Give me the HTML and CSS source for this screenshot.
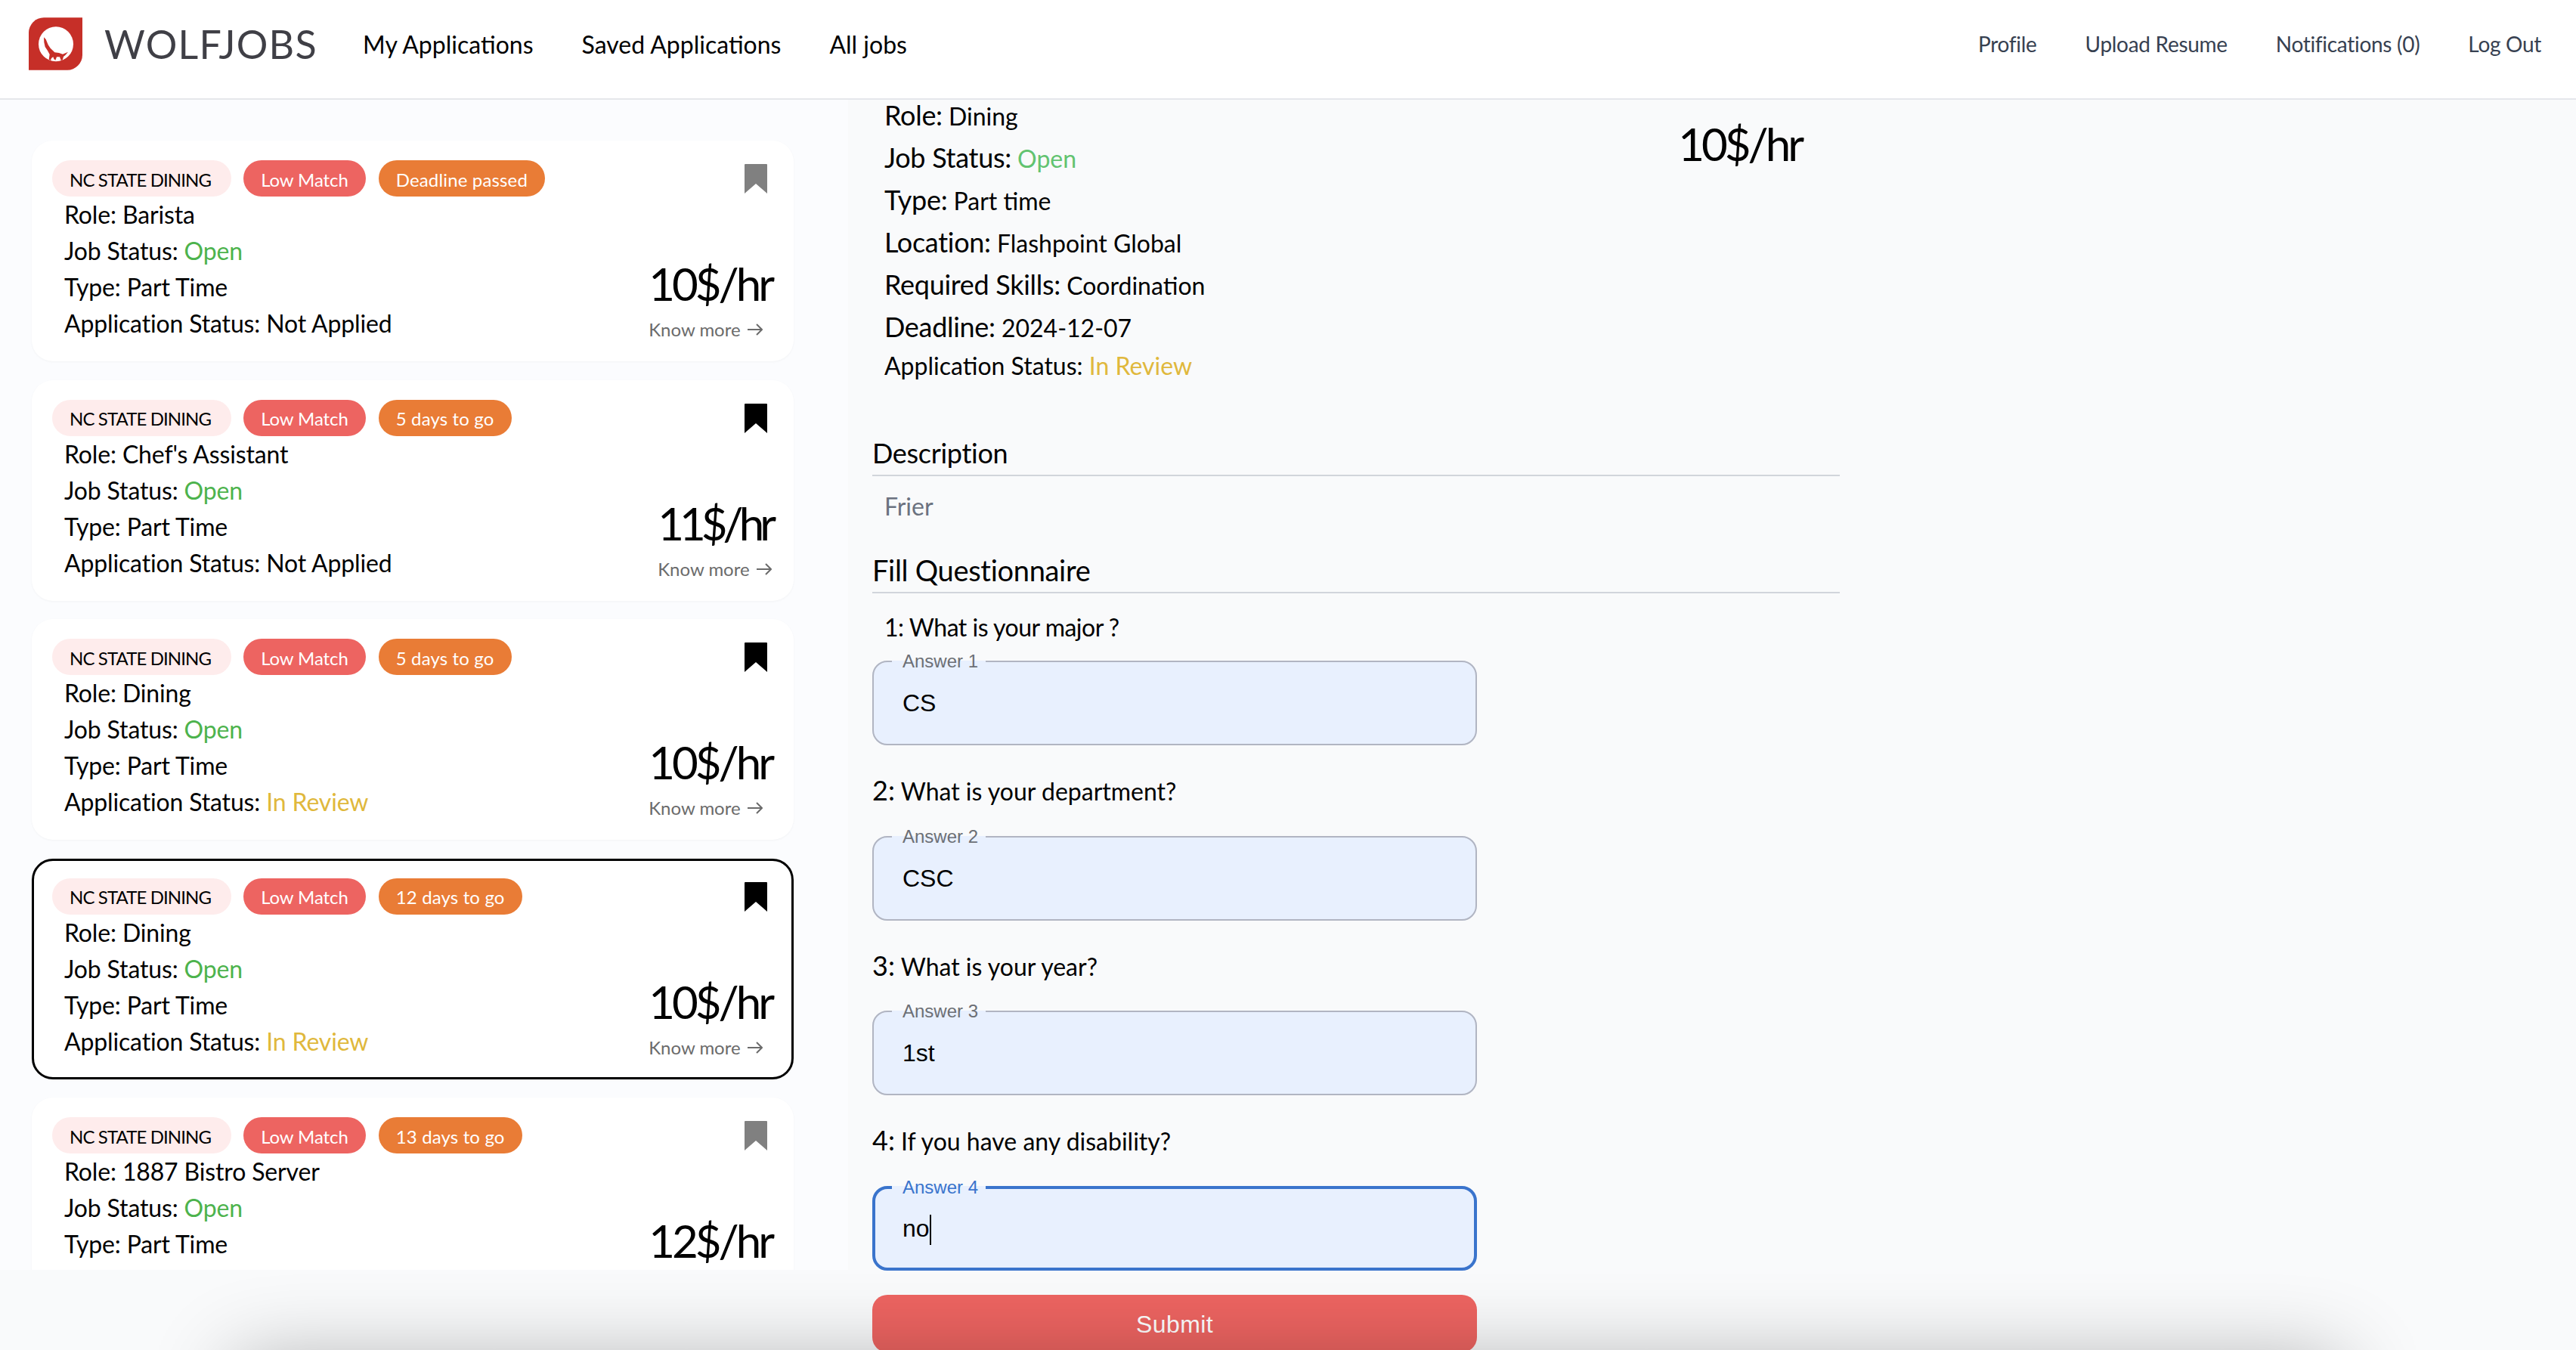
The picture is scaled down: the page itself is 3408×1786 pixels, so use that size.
FILE: index.html
```html
<!DOCTYPE html>
<html lang="en">
<head>
<meta charset="utf-8">
<title>WolfJobs</title>
<link rel="stylesheet" href="styles.css">
</head>
<body>
<header class="nav">
  <svg class="logo" viewBox="5 10 213 208" aria-label="WolfJobs logo">
    <path fill="#c62f28" d="M65 10H218V158A60 60 0 0 1 158 218H5V70A60 60 0 0 1 65 10Z"/>
    <circle cx="113" cy="115" r="69" fill="#fff"/>
    <path fill="#c62f28" d="M65 88L73 96L82 118L91 131L108 148L125 150L140 155L161 146L151 158L143 165L139 179L133 179L128 166L116 166L111 179L105 174L102 166L95 171L92 180L85 176L88 156L80 141L70 126L66 108Z"/>
    <path fill="#c62f28" d="M52 150Q62 168 76 176L82 184L62 178Z"/>
  </svg>
  <span class="brand">WOLFJOBS</span>
  <nav class="main-links">
    <a>My Applications</a>
    <a>Saved Applications</a>
    <a>All jobs</a>
  </nav>
  <nav class="side-links">
    <a>Profile</a>
    <a>Upload Resume</a>
    <a>Notifications (0)</a>
    <a>Log Out</a>
  </nav>
</header>

<main class="layout">
  <section class="job-list">
    <article class="card">
      <div class="card-top">
        <div class="pills"><span class="pill pill-company">NC STATE DINING</span><span class="pill pill-match">Low Match</span><span class="pill pill-deadline">Deadline passed</span></div>
        <svg class="bookmark bookmark-off" viewBox="0 0 30 39"><path d="M0 1Q0 0 1 0H29Q30 0 30 1V39L15 26L0 39Z"/></svg>
      </div>
      <div class="card-body">
        <div class="info">
          <div>Role: Barista</div>
          <div>Job Status: <span class="open">Open</span></div>
          <div>Type: Part Time</div>
          <div>Application Status: Not Applied</div>
        </div>
        <div class="pay">
          <div class="price">10$/hr</div>
          <div class="more">Know more <svg class="arrow" viewBox="0 0 20 16"><path d="M0 8H19M12 1L19 8L12 15"/></svg></div>
        </div>
      </div>
    </article>

    <article class="card">
      <div class="card-top">
        <div class="pills"><span class="pill pill-company">NC STATE DINING</span><span class="pill pill-match">Low Match</span><span class="pill pill-deadline">5 days to go</span></div>
        <svg class="bookmark" viewBox="0 0 30 39"><path d="M0 1Q0 0 1 0H29Q30 0 30 1V39L15 26L0 39Z"/></svg>
      </div>
      <div class="card-body">
        <div class="info">
          <div>Role: Chef's Assistant</div>
          <div>Job Status: <span class="open">Open</span></div>
          <div>Type: Part Time</div>
          <div>Application Status: Not Applied</div>
        </div>
        <div class="pay">
          <div class="price price-narrow">11$/hr</div>
          <div class="more">Know more <svg class="arrow" viewBox="0 0 20 16"><path d="M0 8H19M12 1L19 8L12 15"/></svg></div>
        </div>
      </div>
    </article>

    <article class="card">
      <div class="card-top">
        <div class="pills"><span class="pill pill-company">NC STATE DINING</span><span class="pill pill-match">Low Match</span><span class="pill pill-deadline">5 days to go</span></div>
        <svg class="bookmark" viewBox="0 0 30 39"><path d="M0 1Q0 0 1 0H29Q30 0 30 1V39L15 26L0 39Z"/></svg>
      </div>
      <div class="card-body">
        <div class="info">
          <div>Role: Dining</div>
          <div>Job Status: <span class="open">Open</span></div>
          <div>Type: Part Time</div>
          <div>Application Status: <span class="review">In Review</span></div>
        </div>
        <div class="pay">
          <div class="price">10$/hr</div>
          <div class="more">Know more <svg class="arrow" viewBox="0 0 20 16"><path d="M0 8H19M12 1L19 8L12 15"/></svg></div>
        </div>
      </div>
    </article>

    <article class="card card-selected">
      <div class="card-top">
        <div class="pills"><span class="pill pill-company">NC STATE DINING</span><span class="pill pill-match">Low Match</span><span class="pill pill-deadline">12 days to go</span></div>
        <svg class="bookmark" viewBox="0 0 30 39"><path d="M0 1Q0 0 1 0H29Q30 0 30 1V39L15 26L0 39Z"/></svg>
      </div>
      <div class="card-body">
        <div class="info">
          <div>Role: Dining</div>
          <div>Job Status: <span class="open">Open</span></div>
          <div>Type: Part Time</div>
          <div>Application Status: <span class="review">In Review</span></div>
        </div>
        <div class="pay">
          <div class="price">10$/hr</div>
          <div class="more">Know more <svg class="arrow" viewBox="0 0 20 16"><path d="M0 8H19M12 1L19 8L12 15"/></svg></div>
        </div>
      </div>
    </article>

    <article class="card">
      <div class="card-top">
        <div class="pills"><span class="pill pill-company">NC STATE DINING</span><span class="pill pill-match">Low Match</span><span class="pill pill-deadline">13 days to go</span></div>
        <svg class="bookmark bookmark-off" viewBox="0 0 30 39"><path d="M0 1Q0 0 1 0H29Q30 0 30 1V39L15 26L0 39Z"/></svg>
      </div>
      <div class="card-body">
        <div class="info">
          <div>Role: 1887 Bistro Server</div>
          <div>Job Status: <span class="open">Open</span></div>
          <div>Type: Part Time</div>
          <div>Application Status: Not Applied</div>
        </div>
        <div class="pay">
          <div class="price">12$/hr</div>
          <div class="more">Know more <svg class="arrow" viewBox="0 0 20 16"><path d="M0 8H19M12 1L19 8L12 15"/></svg></div>
        </div>
      </div>
    </article>
  </section>

  <section class="detail">
    <div class="detail-scroll">
      <div class="detail-head">
        <div class="facts">
          <div class="fact fact-first"><b>Role:</b> <span class="val">Dining</span></div>
          <div class="fact"><b>Job Status:</b> <span class="open-light">Open</span></div>
          <div class="fact"><b>Type:</b> <span class="val">Part time</span></div>
          <div class="fact"><b>Location:</b> <span class="val">Flashpoint Global</span></div>
          <div class="fact"><b>Required Skills:</b> <span class="val">Coordination</span></div>
          <div class="fact"><b>Deadline:</b> <span class="val">2024-12-07</span></div>
          <div class="fact fact-small">Application Status: <span class="review">In Review</span></div>
        </div>
        <div class="detail-price">10$/hr</div>
      </div>

      <h2 class="section-title">Description</h2>
      <p class="description">Frier</p>

      <h2 class="section-title section-title-big">Fill Questionnaire</h2>

      <form class="form">
        <p class="question question-first">1: What is your major ?</p>
        <fieldset class="field"><legend>Answer 1</legend><div class="field-value">CS</div></fieldset>
        <p class="question"><span class="qnum">2:</span> What is your department?</p>
        <fieldset class="field"><legend>Answer 2</legend><div class="field-value">CSC</div></fieldset>
        <p class="question"><span class="qnum">3:</span> What is your year?</p>
        <fieldset class="field"><legend>Answer 3</legend><div class="field-value">1st</div></fieldset>
        <p class="question"><span class="qnum">4:</span> If you have any disability?</p>
        <fieldset class="field field-focus"><legend>Answer 4</legend><div class="field-value"><span class="caret">no</span></div></fieldset>
        <button class="submit" type="button">Submit</button>
      </form>
    </div>
  </section>
</main>
<div class="footer-shadow"></div>
</body>
</html>
```
FILE: styles.css
```css
* { box-sizing: border-box; }

html, body {
  margin: 0;
  height: 1786px;
  overflow: hidden;
}

body {
  background: #f9fafb;
  color: #000;
  font-family: "Lato", "Liberation Sans", sans-serif;
  font-size: 32px;
}

/* header */
.nav {
  display: flex;
  align-items: center;
  height: 132px;
  padding: 0 46px 14px 38px;
  background: #fff;
  border-bottom: 2px solid #e5e7eb;
}

.logo {
  width: 71px;
  height: 70px;
  flex: none;
}

.brand {
  margin-left: 29px;
  font-size: 52px;
  color: #3f3f46;
  letter-spacing: 1.3px;
}

.main-links {
  display: flex;
  gap: 64px;
  margin-left: 60px;
  font-size: 32px;
}

.side-links {
  display: flex;
  gap: 64px;
  margin-left: auto;
  font-size: 28px;
  letter-spacing: -0.3px;
  color: #374151;
}

/* layout */
.layout {
  display: flex;
  height: 1548px;
}

.job-list {
  flex: none;
  width: 1122px;
  height: 1548px;
  overflow: hidden;
  padding: 54px 72px 0 42px;
  background: #fbfcfe;
  display: flex;
  flex-direction: column;
  gap: 24.5px;
}

/* cards */
.card {
  flex: none;
  height: 292px;
  padding: 23px 26px 0 24px;
  background: #fff;
  border: 3px solid transparent;
  border-radius: 28px;
  box-shadow: 0 1px 3px rgba(0, 0, 0, 0.04);
}

.card-selected {
  border-color: #000;
}

.card-top {
  display: flex;
  justify-content: space-between;
  height: 48px;
  padding-right: 6px;
}

.pills {
  display: flex;
  gap: 16px;
}

.pill {
  display: flex;
  align-items: center;
  height: 48px;
  padding: 2px 23px 0;
  border-radius: 24px;
  font-size: 24px;
  white-space: nowrap;
}

.pill-company { background: #feecec; letter-spacing: -0.9px; padding-right: 27px; }
.pill-match { background: #ed6461; color: #fff; letter-spacing: -0.1px; }
.pill-deadline { background: #e97c36; color: #fff; letter-spacing: 0.15px; margin-left: 1px; }

.bookmark {
  width: 30px;
  height: 39px;
  margin-top: 5px;
  fill: #000;
}

.bookmark-off { fill: #808080; }

.card-body {
  display: flex;
  justify-content: space-between;
  align-items: flex-end;
  padding-left: 16px;
}

.info {
  line-height: 48px;
  letter-spacing: -0.15px;
  white-space: nowrap;
}

.open { color: #4db34d; }
.open-light { color: #62c370; }
.review { color: #e0b83c; }

.pay {
  display: flex;
  flex-direction: column;
  width: max-content;
}

.price {
  align-self: flex-end;
  font-size: 60px;
  line-height: 90px;
  letter-spacing: -4px;
}

.price-narrow {
  letter-spacing: -6px;
}

.more {
  align-self: flex-start;
  display: flex;
  align-items: center;
  gap: 9px;
  font-size: 24px;
  line-height: 32px;
  color: #6b6b6b;
  white-space: nowrap;
}

.arrow {
  width: 20px;
  height: 16px;
  fill: none;
  stroke: #6b6b6b;
  stroke-width: 2;
}

/* detail */
.detail {
  flex: 1;
  padding-left: 32px;
}

.detail-scroll {
  width: 1280px;
}

.detail-head {
  display: flex;
  justify-content: space-between;
  padding: 0 51px 0 16px;
}

.fact {
  height: 56px;
  font-size: 32px;
  line-height: 56px;
  white-space: nowrap;
}

.fact b {
  font-size: 36px;
  font-weight: 400;
  letter-spacing: -0.3px;
}

.fact-first {
  height: 48px;
  line-height: 40px;
}

.fact-small {
  height: 48px;
  line-height: 48px;
}

.detail-price {
  font-size: 60px;
  line-height: 90px;
  letter-spacing: -4px;
  margin-top: 13px;
}

.section-title {
  margin: 63px 0 0;
  font-size: 36px;
  font-weight: 400;
  line-height: 57px;
  letter-spacing: -0.3px;
  border-bottom: 2px solid #d1d5db;
}

.section-title-big {
  margin-top: 32px;
  font-size: 38px;
}

.description {
  margin: 16px 0 0 16px;
  line-height: 48px;
  color: #6b7280;
}

/* form */
.form {
  display: flex;
  flex-direction: column;
  align-items: flex-start;
}

.question {
  margin: 35px 0 36.5px;
  font-size: 32px;
  line-height: 48px;
  height: 48px;
}

.question-first {
  margin: 21px 0 20px 16px;
  letter-spacing: -0.5px;
}

.qnum { font-size: 36px; }

.field {
  flex: none;
  width: 800px;
  height: 112px;
  margin: 0;
  padding: 0 36px 0 38px;
  background: #e8f0fe;
  border: 2px solid #b1b5c2;
  border-radius: 20px;
  display: flex;
  font-family: "Liberation Sans", Arial, sans-serif;
}

.field legend {
  height: 0;
  margin-left: -14px;
  padding: 0 10px 0 14px;
  font-size: 24px;
  line-height: 0;
  color: #6c6f75;
}

.field-value {
  font-size: 32px;
  line-height: 108px;
  color: #000;
}

.field-focus {
  border: 4px solid #3a74cc;
  padding-left: 36px;
}

.field-focus legend { color: #3a74cc; }
.field-focus .field-value { line-height: 104px; }

.caret {
  display: inline-block;
  height: 40px;
  line-height: 36px;
  vertical-align: middle;
  border-right: 2px solid #000;
}

.submit {
  flex: none;
  width: 800px;
  height: 76px;
  margin-top: 32px;
  padding: 4px 0 0;
  border: 0;
  border-radius: 20px;
  background: #ed6461;
  color: #fff;
  font-family: "Liberation Sans", Arial, sans-serif;
  font-size: 32px;
  letter-spacing: 0.4px;
}

.footer-shadow {
  position: fixed;
  left: 320px;
  right: 320px;
  top: 1810px;
  height: 100px;
  box-shadow: 0 0 110px 10px rgba(0, 0, 0, 0.3);
  pointer-events: none;
}
```
